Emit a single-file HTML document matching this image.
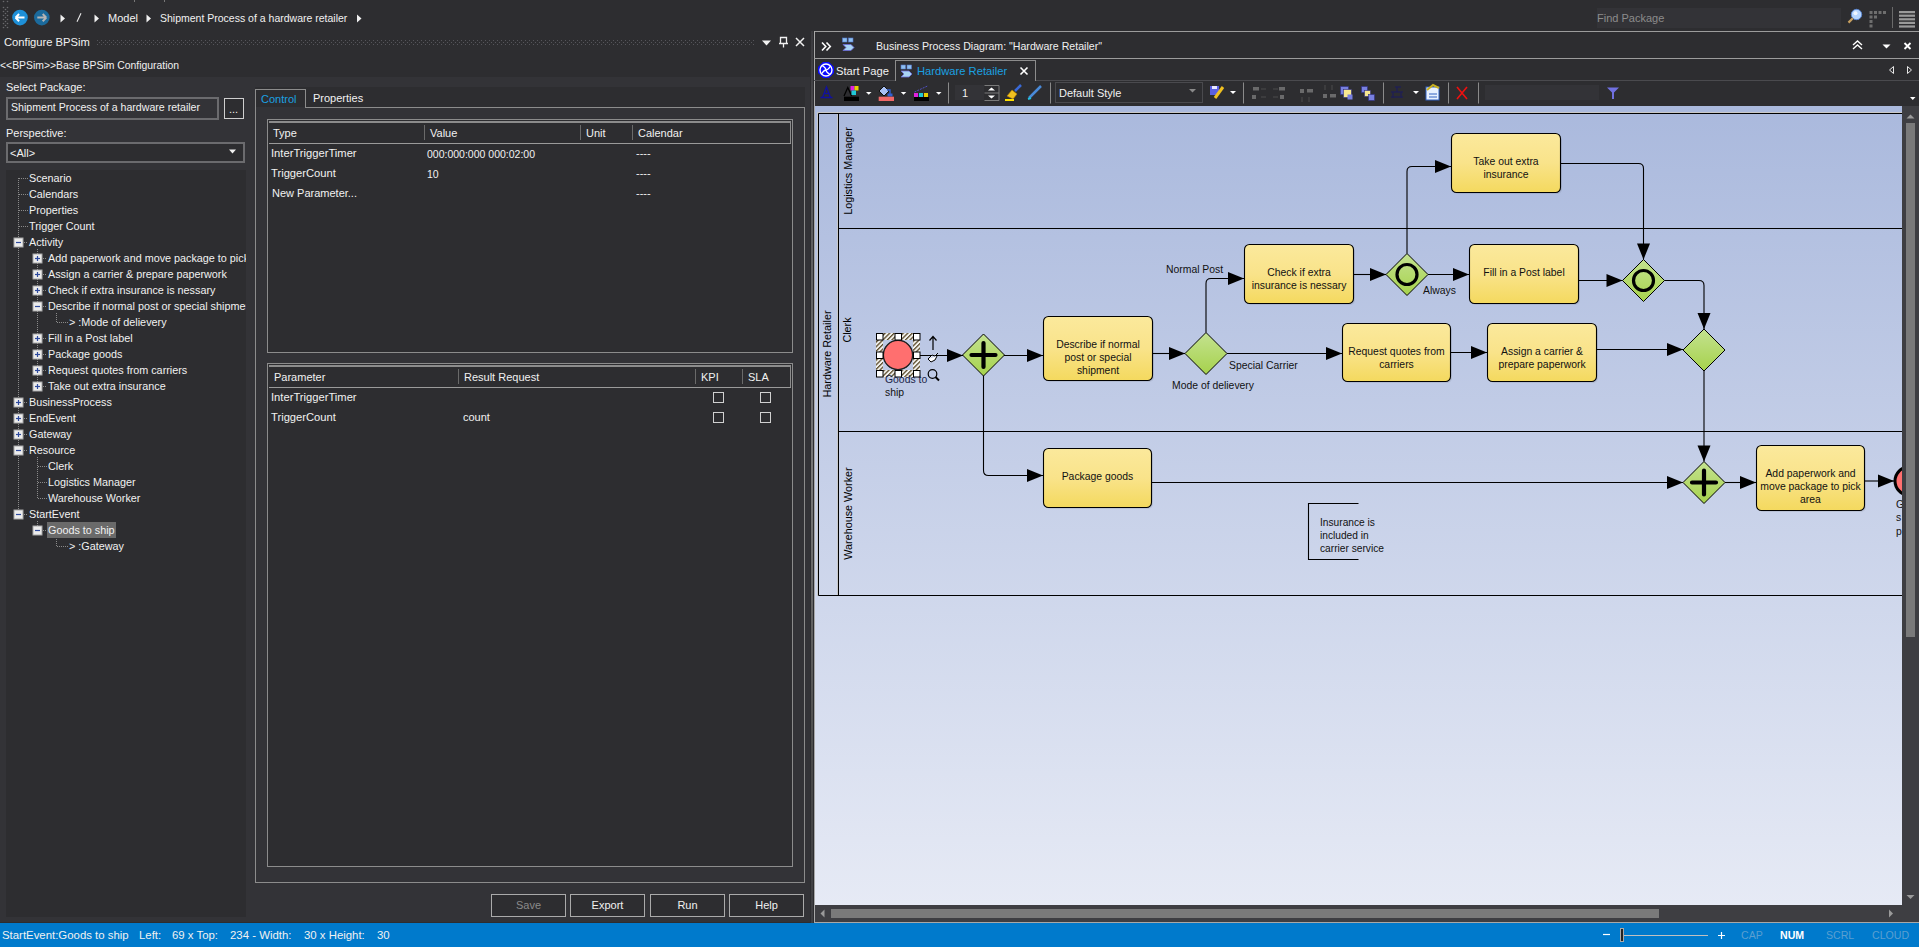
<!DOCTYPE html>
<html><head><meta charset="utf-8">
<style>
*{margin:0;padding:0;box-sizing:border-box}
html,body{width:1919px;height:947px;overflow:hidden;background:#2d2d30;font-family:"Liberation Sans",sans-serif;color:#f1f1f1;font-size:11px}
.a{position:absolute;white-space:nowrap}
.t{position:absolute;white-space:nowrap;line-height:14px}
</style></head><body>
<!-- TOPBAR -->
<div id="top">
<svg class="a" style="left:0;top:0" width="380" height="32">
 <g fill="#6a6a6e"><circle cx="3.5" cy="1.5" r="0.8"/><circle cx="7.5" cy="1.5" r="0.8"/>
 <circle cx="3.5" cy="7.5" r="0.8"/><circle cx="7.5" cy="7.5" r="0.8"/><circle cx="5.5" cy="9.5" r="0.8"/>
 <circle cx="3.5" cy="11.5" r="0.8"/><circle cx="7.5" cy="11.5" r="0.8"/><circle cx="5.5" cy="13.5" r="0.8"/>
 <circle cx="3.5" cy="15.5" r="0.8"/><circle cx="7.5" cy="15.5" r="0.8"/><circle cx="5.5" cy="17.5" r="0.8"/>
 <circle cx="3.5" cy="19.5" r="0.8"/><circle cx="7.5" cy="19.5" r="0.8"/><circle cx="5.5" cy="21.5" r="0.8"/>
 <circle cx="3.5" cy="23.5" r="0.8"/><circle cx="7.5" cy="23.5" r="0.8"/><circle cx="5.5" cy="25.5" r="0.8"/>
 <circle cx="3.5" cy="27.5" r="0.8"/><circle cx="7.5" cy="27.5" r="0.8"/></g>
 <circle cx="20" cy="17.6" r="7.8" fill="#1e90d8"/>
 <path d="M15.5 17.6h9M15.5 17.6l3.6-3.6M15.5 17.6l3.6 3.6" stroke="#fff" stroke-width="2" fill="none"/>
 <circle cx="41.8" cy="17.6" r="7.8" fill="#1b6a9c"/>
 <path d="M46.3 17.6h-9M46.3 17.6l-3.6-3.6M46.3 17.6l-3.6 3.6" stroke="#b4b4b4" stroke-width="2" fill="none"/>
 <path d="M60.5 14.5l4.5 4-4.5 4z" fill="#f1f1f1"/>
 <path d="M77 21.8l4-8.5" stroke="#e8e8e8" stroke-width="1.1"/>
 <path d="M94.5 14.5l4.5 4-4.5 4z" fill="#f1f1f1"/>
 <path d="M146.5 14.5l4.5 4-4.5 4z" fill="#f1f1f1"/>
 <path d="M357 14.5l4.5 4-4.5 4z" fill="#f1f1f1"/>
 <path d="M134.5 0v2M164.5 0v2" stroke="#777"/>
</svg>
<div class="t" style="left:108px;top:11px;font-size:11px">Model</div>
<div class="t" style="left:160px;top:11px;font-size:10.5px">Shipment Process of a hardware retailer</div>
<div class="a" style="left:1597px;top:8px;width:244px;height:20px;background:#333337"></div>
<div class="t" style="left:1597px;top:11px;color:#8c8c8c;font-size:11px">Find Package</div>
<svg class="a" style="left:1844px;top:6px" width="75" height="24">
 <circle cx="12.5" cy="8.5" r="5.2" fill="#b7d6ff" stroke="#5a86d0" stroke-width="1"/>
 <circle cx="11.5" cy="7.3" r="2" fill="#eef6ff"/>
 <path d="M8.8 12.3l-4.3 4.3" stroke="#c8a060" stroke-width="2.2"/>
 <g fill="#6e6e6e"><rect x="25.5" y="5" width="3" height="3"/><rect x="30" y="5" width="3" height="3"/><rect x="34.5" y="5" width="3" height="3"/><rect x="39" y="5" width="3" height="3"/><rect x="25.5" y="9.5" width="3" height="3"/><rect x="30" y="9.5" width="3" height="3"/><rect x="25.5" y="14" width="3" height="3"/><rect x="25.5" y="18.5" width="3" height="3"/></g>
 <path d="M48.5 1v21" stroke="#6a6a6a"/>
 <g fill="#9a9a9a"><rect x="55" y="5" width="16" height="2.2"/><rect x="55" y="8.6" width="16" height="2.2"/><rect x="55" y="12.2" width="16" height="2.2"/><rect x="55" y="15.8" width="16" height="2.2"/><rect x="55" y="19.4" width="16" height="2.2"/></g>
</svg>
</div>
<!-- LEFT PANEL -->
<div id="left">
<div class="t" style="left:4px;top:35px;font-size:11.2px">Configure BPSim</div>
<svg class="a" style="left:97px;top:39px" width="658" height="7"><defs><pattern id="grip" width="4" height="4" patternUnits="userSpaceOnUse"><rect x="0" y="1" width="1" height="1" fill="#55555a"/><rect x="2" y="3" width="1" height="1" fill="#55555a"/></pattern></defs><rect width="658" height="7" fill="url(#grip)"/></svg>
<svg class="a" style="left:755px;top:34px" width="55" height="16">
 <path d="M7 6.5h9l-4.5 5z" fill="#f1f1f1"/>
 <path d="M25.5 3.5h6v6h-6zM24 9.5h9M28.5 9.5v4" stroke="#f1f1f1" stroke-width="1.3" fill="none"/>
 <path d="M41 4l8 8M49 4l-8 8" stroke="#f1f1f1" stroke-width="1.5"/>
</svg>
<div class="t" style="left:0px;top:59px;font-size:10.4px">&lt;&lt;BPSim&gt;&gt;Base BPSim Configuration</div>
<div class="a" style="left:0;top:77px;width:810px;height:845px;background:#333337"></div>
<div class="t" style="left:6px;top:80px;font-size:11px">Select Package:</div>
<div class="a" style="left:6px;top:97px;width:213px;height:23px;border:2px solid #6b6b6e;background:#333337"></div>
<div class="t" style="left:11px;top:100px;font-size:10.6px">Shipment Process of a hardware retailer</div>
<div class="a" style="left:224px;top:98px;width:20px;height:21px;border:1px solid #cfcfcf;background:#2d2d30"></div>
<div class="t" style="left:229px;top:102px;font-size:11px">...</div>
<div class="t" style="left:6px;top:126px;font-size:11px">Perspective:</div>
<div class="a" style="left:6px;top:142px;width:239px;height:21px;border:2px solid #6b6b6e;background:#2d2d30"></div>
<div class="t" style="left:10px;top:146px;font-size:11px">&lt;All&gt;</div>
<svg class="a" style="left:228px;top:148px" width="10" height="8"><path d="M1 1.5h7l-3.5 4z" fill="#f1f1f1"/></svg>
<div class="a" style="left:6px;top:170px;width:240px;height:747px;background:#2d2d30;overflow:hidden">
<svg class="a" style="left:0;top:0" width="240" height="400"><path d="M12.5 8V344.5" stroke="#8a8a8a" stroke-width="1" stroke-dasharray="1 1"/><path d="M31.5 79V216.5" stroke="#8a8a8a" stroke-width="1" stroke-dasharray="1 1"/><path d="M31.5 287V328.5" stroke="#8a8a8a" stroke-width="1" stroke-dasharray="1 1"/><path d="M31.5 351V360.5" stroke="#8a8a8a" stroke-width="1" stroke-dasharray="1 1"/><path d="M50.5 143V152.5" stroke="#8a8a8a" stroke-width="1" stroke-dasharray="1 1"/><path d="M50.5 367V376.5" stroke="#8a8a8a" stroke-width="1" stroke-dasharray="1 1"/><path d="M13 8.5H22" stroke="#8a8a8a" stroke-width="1" stroke-dasharray="1 1"/><path d="M13 24.5H22" stroke="#8a8a8a" stroke-width="1" stroke-dasharray="1 1"/><path d="M13 40.5H22" stroke="#8a8a8a" stroke-width="1" stroke-dasharray="1 1"/><path d="M13 56.5H22" stroke="#8a8a8a" stroke-width="1" stroke-dasharray="1 1"/><path d="M18 72.5H22" stroke="#8a8a8a" stroke-width="1" stroke-dasharray="1 1"/><rect x="8.0" y="68" width="9" height="9" fill="#ececec" stroke="#a8a8a8" stroke-width="1"/><path d="M10.0 72.5h5" stroke="#2e4a9e" stroke-width="1.2"/><path d="M37 88.5H41" stroke="#8a8a8a" stroke-width="1" stroke-dasharray="1 1"/><rect x="27.0" y="84" width="9" height="9" fill="#ececec" stroke="#a8a8a8" stroke-width="1"/><path d="M29.0 88.5h5" stroke="#2e4a9e" stroke-width="1.2"/><path d="M31.5 86v5" stroke="#2e4a9e" stroke-width="1.2"/><path d="M37 104.5H41" stroke="#8a8a8a" stroke-width="1" stroke-dasharray="1 1"/><rect x="27.0" y="100" width="9" height="9" fill="#ececec" stroke="#a8a8a8" stroke-width="1"/><path d="M29.0 104.5h5" stroke="#2e4a9e" stroke-width="1.2"/><path d="M31.5 102v5" stroke="#2e4a9e" stroke-width="1.2"/><path d="M37 120.5H41" stroke="#8a8a8a" stroke-width="1" stroke-dasharray="1 1"/><rect x="27.0" y="116" width="9" height="9" fill="#ececec" stroke="#a8a8a8" stroke-width="1"/><path d="M29.0 120.5h5" stroke="#2e4a9e" stroke-width="1.2"/><path d="M31.5 118v5" stroke="#2e4a9e" stroke-width="1.2"/><path d="M37 136.5H41" stroke="#8a8a8a" stroke-width="1" stroke-dasharray="1 1"/><rect x="27.0" y="132" width="9" height="9" fill="#ececec" stroke="#a8a8a8" stroke-width="1"/><path d="M29.0 136.5h5" stroke="#2e4a9e" stroke-width="1.2"/><path d="M51 152.5H62" stroke="#8a8a8a" stroke-width="1" stroke-dasharray="1 1"/><path d="M37 168.5H41" stroke="#8a8a8a" stroke-width="1" stroke-dasharray="1 1"/><rect x="27.0" y="164" width="9" height="9" fill="#ececec" stroke="#a8a8a8" stroke-width="1"/><path d="M29.0 168.5h5" stroke="#2e4a9e" stroke-width="1.2"/><path d="M31.5 166v5" stroke="#2e4a9e" stroke-width="1.2"/><path d="M37 184.5H41" stroke="#8a8a8a" stroke-width="1" stroke-dasharray="1 1"/><rect x="27.0" y="180" width="9" height="9" fill="#ececec" stroke="#a8a8a8" stroke-width="1"/><path d="M29.0 184.5h5" stroke="#2e4a9e" stroke-width="1.2"/><path d="M31.5 182v5" stroke="#2e4a9e" stroke-width="1.2"/><path d="M37 200.5H41" stroke="#8a8a8a" stroke-width="1" stroke-dasharray="1 1"/><rect x="27.0" y="196" width="9" height="9" fill="#ececec" stroke="#a8a8a8" stroke-width="1"/><path d="M29.0 200.5h5" stroke="#2e4a9e" stroke-width="1.2"/><path d="M31.5 198v5" stroke="#2e4a9e" stroke-width="1.2"/><path d="M37 216.5H41" stroke="#8a8a8a" stroke-width="1" stroke-dasharray="1 1"/><rect x="27.0" y="212" width="9" height="9" fill="#ececec" stroke="#a8a8a8" stroke-width="1"/><path d="M29.0 216.5h5" stroke="#2e4a9e" stroke-width="1.2"/><path d="M31.5 214v5" stroke="#2e4a9e" stroke-width="1.2"/><path d="M18 232.5H22" stroke="#8a8a8a" stroke-width="1" stroke-dasharray="1 1"/><rect x="8.0" y="228" width="9" height="9" fill="#ececec" stroke="#a8a8a8" stroke-width="1"/><path d="M10.0 232.5h5" stroke="#2e4a9e" stroke-width="1.2"/><path d="M12.5 230v5" stroke="#2e4a9e" stroke-width="1.2"/><path d="M18 248.5H22" stroke="#8a8a8a" stroke-width="1" stroke-dasharray="1 1"/><rect x="8.0" y="244" width="9" height="9" fill="#ececec" stroke="#a8a8a8" stroke-width="1"/><path d="M10.0 248.5h5" stroke="#2e4a9e" stroke-width="1.2"/><path d="M12.5 246v5" stroke="#2e4a9e" stroke-width="1.2"/><path d="M18 264.5H22" stroke="#8a8a8a" stroke-width="1" stroke-dasharray="1 1"/><rect x="8.0" y="260" width="9" height="9" fill="#ececec" stroke="#a8a8a8" stroke-width="1"/><path d="M10.0 264.5h5" stroke="#2e4a9e" stroke-width="1.2"/><path d="M12.5 262v5" stroke="#2e4a9e" stroke-width="1.2"/><path d="M18 280.5H22" stroke="#8a8a8a" stroke-width="1" stroke-dasharray="1 1"/><rect x="8.0" y="276" width="9" height="9" fill="#ececec" stroke="#a8a8a8" stroke-width="1"/><path d="M10.0 280.5h5" stroke="#2e4a9e" stroke-width="1.2"/><path d="M32 296.5H41" stroke="#8a8a8a" stroke-width="1" stroke-dasharray="1 1"/><path d="M32 312.5H41" stroke="#8a8a8a" stroke-width="1" stroke-dasharray="1 1"/><path d="M32 328.5H41" stroke="#8a8a8a" stroke-width="1" stroke-dasharray="1 1"/><path d="M18 344.5H22" stroke="#8a8a8a" stroke-width="1" stroke-dasharray="1 1"/><rect x="8.0" y="340" width="9" height="9" fill="#ececec" stroke="#a8a8a8" stroke-width="1"/><path d="M10.0 344.5h5" stroke="#2e4a9e" stroke-width="1.2"/><path d="M37 360.5H41" stroke="#8a8a8a" stroke-width="1" stroke-dasharray="1 1"/><rect x="27.0" y="356" width="9" height="9" fill="#ececec" stroke="#a8a8a8" stroke-width="1"/><path d="M29.0 360.5h5" stroke="#2e4a9e" stroke-width="1.2"/><path d="M51 376.5H62" stroke="#8a8a8a" stroke-width="1" stroke-dasharray="1 1"/></svg>
</div>
<div class="a" style="left:0;top:0;width:246px;height:917px;overflow:hidden">
<div class="t" style="left:29px;top:171px;font-size:10.8px">Scenario</div>
<div class="t" style="left:29px;top:187px;font-size:10.8px">Calendars</div>
<div class="t" style="left:29px;top:203px;font-size:10.8px">Properties</div>
<div class="t" style="left:29px;top:219px;font-size:10.8px">Trigger Count</div>
<div class="t" style="left:29px;top:235px;font-size:10.8px">Activity</div>
<div class="t" style="left:48px;top:251px;font-size:10.8px">Add paperwork and move package to pick area</div>
<div class="t" style="left:48px;top:267px;font-size:10.8px">Assign a carrier &amp; prepare paperwork</div>
<div class="t" style="left:48px;top:283px;font-size:10.8px">Check if extra insurance is nessary</div>
<div class="t" style="left:48px;top:299px;font-size:10.8px">Describe if normal post or special shipment</div>
<div class="t" style="left:69px;top:315px;font-size:10.8px">&gt; :Mode of delievery</div>
<div class="t" style="left:48px;top:331px;font-size:10.8px">Fill in a Post label</div>
<div class="t" style="left:48px;top:347px;font-size:10.8px">Package goods</div>
<div class="t" style="left:48px;top:363px;font-size:10.8px">Request quotes from carriers</div>
<div class="t" style="left:48px;top:379px;font-size:10.8px">Take out extra insurance</div>
<div class="t" style="left:29px;top:395px;font-size:10.8px">BusinessProcess</div>
<div class="t" style="left:29px;top:411px;font-size:10.8px">EndEvent</div>
<div class="t" style="left:29px;top:427px;font-size:10.8px">Gateway</div>
<div class="t" style="left:29px;top:443px;font-size:10.8px">Resource</div>
<div class="t" style="left:48px;top:459px;font-size:10.8px">Clerk</div>
<div class="t" style="left:48px;top:475px;font-size:10.8px">Logistics Manager</div>
<div class="t" style="left:48px;top:491px;font-size:10.8px">Warehouse Worker</div>
<div class="t" style="left:29px;top:507px;font-size:10.8px">StartEvent</div>
<div class="a" style="left:47px;top:522px;width:69px;height:16px;background:#6a6a6a"></div>
<div class="t" style="left:48px;top:523px;font-size:10.8px">Goods to ship</div>
<div class="t" style="left:69px;top:539px;font-size:10.8px">&gt; :Gateway</div>
</div>
<!-- tabs -->
<div class="a" style="left:255px;top:87px;width:555px;height:20px;background:#2d2d30"></div>
<div class="a" style="left:255px;top:89px;width:51px;height:20px;border:1px solid #8c8c8c;border-bottom:none;background:#2d2d30"></div>
<div class="t" style="left:261px;top:92px;color:#1ba1e2;font-size:11px">Control</div>
<div class="t" style="left:313px;top:91px;font-size:11px">Properties</div>
<div class="a" style="left:255px;top:107px;width:550px;height:776px;border:1px solid #8c8c8c;border-top:none;background:#333337"></div>
<div class="a" style="left:305px;top:107px;width:500px;height:1px;background:#8c8c8c"></div>
<div class="a" style="left:805px;top:87px;width:5px;height:835px;background:#333337"></div>
<!-- table 1 -->
<div class="a" style="left:267px;top:119px;width:526px;height:234px;border:1px solid #8c8c8c;background:#2d2d30"></div>
<div class="a" style="left:269px;top:121px;width:522px;height:2px;background:#8c8c8c"></div>
<div class="a" style="left:269px;top:143px;width:522px;height:1px;background:#9a9a9a"></div>
<div class="a" style="left:790px;top:121px;width:1px;height:22px;background:#8c8c8c"></div>
<div class="a" style="left:424px;top:125px;width:1px;height:15px;background:#6a6a6a"></div>
<div class="a" style="left:580px;top:125px;width:1px;height:15px;background:#6a6a6a"></div>
<div class="a" style="left:632px;top:125px;width:1px;height:15px;background:#6a6a6a"></div>
<div class="t" style="left:273px;top:126px">Type</div>
<div class="t" style="left:430px;top:126px">Value</div>
<div class="t" style="left:586px;top:126px">Unit</div>
<div class="t" style="left:638px;top:126px">Calendar</div>
<div class="t" style="left:271px;top:146px;font-size:11.2px">InterTriggerTimer</div>
<div class="t" style="left:427px;top:147px;font-size:10.5px">000:000:000 000:02:00</div>
<div class="t" style="left:636px;top:146px">----</div>
<div class="t" style="left:271px;top:166px;font-size:11.2px">TriggerCount</div>
<div class="t" style="left:427px;top:167px;font-size:10.5px">10</div>
<div class="t" style="left:636px;top:166px">----</div>
<div class="t" style="left:272px;top:186px;font-size:11px">New Parameter...</div>
<div class="t" style="left:636px;top:186px">----</div>
<!-- table 2 -->
<div class="a" style="left:267px;top:363px;width:526px;height:504px;border:1px solid #8c8c8c;background:#2d2d30"></div>
<div class="a" style="left:269px;top:365px;width:522px;height:2px;background:#8c8c8c"></div>
<div class="a" style="left:269px;top:387px;width:522px;height:1px;background:#9a9a9a"></div>
<div class="a" style="left:790px;top:365px;width:1px;height:22px;background:#8c8c8c"></div>
<div class="a" style="left:458px;top:369px;width:1px;height:15px;background:#6a6a6a"></div>
<div class="a" style="left:695px;top:369px;width:1px;height:15px;background:#6a6a6a"></div>
<div class="a" style="left:742px;top:369px;width:1px;height:15px;background:#6a6a6a"></div>
<div class="t" style="left:274px;top:370px">Parameter</div>
<div class="t" style="left:464px;top:370px">Result Request</div>
<div class="t" style="left:701px;top:370px">KPI</div>
<div class="t" style="left:748px;top:370px">SLA</div>
<div class="t" style="left:271px;top:390px;font-size:11.2px">InterTriggerTimer</div>
<div class="t" style="left:271px;top:410px;font-size:11.2px">TriggerCount</div>
<div class="t" style="left:463px;top:410px;font-size:11px">count</div>
<div class="a" style="left:713px;top:392px;width:11px;height:11px;border:1px solid #d0d0d0"></div>
<div class="a" style="left:760px;top:392px;width:11px;height:11px;border:1px solid #d0d0d0"></div>
<div class="a" style="left:713px;top:412px;width:11px;height:11px;border:1px solid #d0d0d0"></div>
<div class="a" style="left:760px;top:412px;width:11px;height:11px;border:1px solid #d0d0d0"></div>
<!-- buttons -->
<div class="a" style="left:491px;top:894px;width:75px;height:23px;border:1px solid #aaa;background:#2d2d30"></div>
<div class="t" style="left:491px;top:898px;width:75px;text-align:center;color:#8a8a8a">Save</div>
<div class="a" style="left:570px;top:894px;width:75px;height:23px;border:1px solid #aaa;background:#2d2d30"></div>
<div class="t" style="left:570px;top:898px;width:75px;text-align:center">Export</div>
<div class="a" style="left:650px;top:894px;width:75px;height:23px;border:1px solid #aaa;background:#2d2d30"></div>
<div class="t" style="left:650px;top:898px;width:75px;text-align:center">Run</div>
<div class="a" style="left:729px;top:894px;width:75px;height:23px;border:1px solid #aaa;background:#2d2d30"></div>
<div class="t" style="left:729px;top:898px;width:75px;text-align:center">Help</div>
<div class="a" style="left:810px;top:31px;width:4px;height:892px;background:#2d2d30"></div>
<div class="a" style="left:811px;top:31px;width:2px;height:892px;background:linear-gradient(#3a3a3e 0%,#5a5a5c 20%,#777 50%,#5c5c5c 70%,#4a4a4a 82%,#3e3e42 100%)"></div>
</div>
<!-- RIGHT PANEL -->
<div id="right">
<div class="a" style="left:814px;top:31px;width:1105px;height:1px;background:#9c9c9c"></div>
<div class="a" style="left:814px;top:31px;width:1px;height:892px;background:#a8a8a8"></div>
<div class="a" style="left:814px;top:922px;width:1105px;height:1px;background:#a8a8a8"></div>
<div class="a" style="left:814px;top:58px;width:1105px;height:1px;background:#9c9c9c"></div>
<svg class="a" style="left:815px;top:32px" width="60" height="26">
 <path d="M7 10.5l3.8 4-3.8 4M11.5 10.5l3.8 4-3.8 4" stroke="#fff" stroke-width="1.6" fill="none"/>
 <rect x="27.5" y="6" width="4.5" height="4" fill="#8ec0f0" stroke="#5577cc" stroke-width="0.6"/>
 <rect x="33.5" y="6" width="4.5" height="4" fill="#8ec0f0" stroke="#5577cc" stroke-width="0.6"/>
 <path d="M28 12.5h8l3 3-3 3h-8l3-3z" fill="#a8d4f4" stroke="#6a6ad8" stroke-width="0.8"/>
</svg>
<div class="t" style="left:876px;top:39px;font-size:10.6px">Business Process Diagram: "Hardware Retailer"</div>
<svg class="a" style="left:1845px;top:34px" width="74" height="22">
 <path d="M8 11l4.5-4 4.5 4M8 15l4.5-4 4.5 4" stroke="#fff" stroke-width="1.4" fill="none"/>
 <path d="M37.5 10.5h8l-4 4z" fill="#fff"/>
 <path d="M59.5 9l6 6M65.5 9l-6 6" stroke="#fff" stroke-width="1.8"/>
</svg>
<!-- tabs -->
<svg class="a" style="left:816px;top:60px" width="20" height="20">
 <path d="M7 2h6l5 5v6l-5 5H7l-5-5V7z" fill="#0a0aff"/>
 <circle cx="10" cy="10" r="6" fill="none" stroke="#fff" stroke-width="1.4"/>
 <path d="M6 5.5Q10 8 10 10T14 14.5M14.5 6Q12 10 10 10T5.5 14" fill="none" stroke="#fff" stroke-width="1.3"/>
</svg>
<div class="t" style="left:836px;top:64px;font-size:11.2px">Start Page</div>
<div class="a" style="left:814px;top:80px;width:1105px;height:1px;background:#4a4a4e"></div>
<div class="a" style="left:895px;top:60px;width:141px;height:21px;border:1px solid #8c8c8c;border-bottom:none;background:#2d2d30"></div>
<svg class="a" style="left:897px;top:60px" width="20" height="20">
 <rect x="4" y="5" width="4.5" height="4" fill="#8ec0f0" stroke="#5577cc" stroke-width="0.6"/>
 <rect x="10" y="5" width="4.5" height="4" fill="#8ec0f0" stroke="#5577cc" stroke-width="0.6"/>
 <path d="M4 11h8l3 3-3 3H4l3-3z" fill="#a8d4f4" stroke="#6a6ad8" stroke-width="0.8"/>
</svg>
<div class="t" style="left:917px;top:64px;color:#1ba1e2;font-size:11.2px">Hardware Retailer</div>
<svg class="a" style="left:1017px;top:64px" width="14" height="14"><path d="M3.5 3.5l7 7M10.5 3.5l-7 7" stroke="#fff" stroke-width="1.6"/></svg>
<svg class="a" style="left:1885px;top:62px" width="34" height="16">
 <path d="M8.5 4.5v7l-4-3.5z" fill="none" stroke="#e8e8e8" stroke-width="1"/>
 <path d="M22.5 4.5v7l4-3.5z" fill="none" stroke="#e8e8e8" stroke-width="1"/>
</svg>
<!-- toolbar -->
<svg class="a" style="left:815px;top:81px" width="1104" height="25">
 <path d="M5.5 16.5h12M7.5 16.5l4-10.5 4 10.5M9 12.5h5" stroke="#1010a0" stroke-width="1.3" fill="none"/>
 <path d="M29 15l3.8-8.5 3.8 8.5" stroke="#000" stroke-width="1.3" fill="none"/>
 <rect x="35.5" y="5" width="4" height="4.5" fill="#e020e0"/><rect x="39.5" y="5" width="4" height="4.5" fill="#e8d000"/><rect x="36.5" y="9.5" width="4.5" height="4.5" fill="#20c8d8"/>
 <rect x="29" y="15.7" width="15" height="4.3" fill="#000"/>
 <path d="M51 11h5.5l-2.75 2.8z" fill="#fff"/>
 <path d="M64 10l5-5 5 5-5 5z" fill="#a8c0f4" stroke="#111" stroke-width="1"/><path d="M72 9h3v4.5" stroke="#3060d0" stroke-width="1.4" fill="none"/><rect x="72.5" y="12.5" width="5" height="3" fill="#3060d0"/>
 <rect x="63.7" y="15.7" width="15.3" height="4.3" fill="#f06868"/>
 <path d="M85.8 11h5.5l-2.75 2.8z" fill="#fff"/>
 <path d="M99.5 11l13-6" stroke="#5050c0" stroke-width="1" stroke-dasharray="2 1"/>
 <rect x="99" y="12" width="4" height="4" fill="#e020e0"/><rect x="104" y="12" width="4" height="4" fill="#20c8d8"/><rect x="109" y="12" width="4" height="4" fill="#e8d000"/>
 <rect x="99" y="16" width="15" height="4" fill="#000"/>
 <path d="M121 11h5.5l-2.75 2.8z" fill="#fff"/>
 <path d="M133.5 1.5v21" stroke="#8a8a8a"/>
 <rect x="140" y="4" width="29" height="15" fill="#333337"/>
 <path d="M169.5 4.5h14.5v15h-14.5M169.5 12h14.5" stroke="#7a7a7a" stroke-width="1" fill="none"/>
 <path d="M173 9.5l3.5-3 3.5 3z M173 14.5l3.5 3 3.5-3z" fill="#fff"/>
 <path d="M192 15l5-6 5 4-4 5z" fill="#f0c020" stroke="#b08000" stroke-width="0.6"/><path d="M200 10l6-6" stroke="#3a6ad8" stroke-width="2.5"/><path d="M190 19h9" stroke="#ffe000" stroke-width="2"/>
 <path d="M214 17l12-12" stroke="#4a8ad8" stroke-width="2.5"/><path d="M213 18l3-1" stroke="#20c0e0" stroke-width="2"/>
 <path d="M235.5 1.5v21" stroke="#8a8a8a"/>
</svg>
<div class="t" style="left:962px;top:86px;font-size:11px">1</div>
<div class="a" style="left:1055px;top:82px;width:148px;height:21px;border:1px solid #4a4a4e;background:#2d2d30"></div>
<div class="t" style="left:1059px;top:86px;font-size:11px">Default Style</div>
<svg class="a" style="left:1188px;top:88px" width="10" height="6"><path d="M1 1h7l-3.5 3.5z" fill="#8a8a8a"/></svg>
<svg class="a" style="left:1205px;top:81px" width="714" height="25">
 <rect x="5" y="5" width="9" height="9" fill="#5a60e0"/><rect x="7" y="5" width="5" height="3" fill="#e8e8ff"/>
 <path d="M10 17l8-11" stroke="#f0c020" stroke-width="3"/>
 <path d="M25 10h6l-3 3z" fill="#fff"/>
 <path d="M38.5 1.5v21" stroke="#8a8a8a"/>
 <g fill="#7a7a7a" opacity="0.8">
 <rect x="48" y="6" width="6" height="3.5"/><rect x="47" y="14" width="4" height="4"/><path d="M56 8h5M56 16h5" stroke="#555" fill="none"/>
 <rect x="74" y="6" width="6" height="3.5"/><rect x="75" y="14" width="4" height="4"/><path d="M68 8h5M68 16h5" stroke="#555" fill="none"/>
 <rect x="95" y="8" width="4" height="4"/><rect x="102" y="8" width="6" height="3.5"/><path d="M97 16v5M104 16v5" stroke="#555" fill="none"/>
 <rect x="118" y="13" width="4" height="4"/><rect x="125" y="13" width="6" height="3.5"/><path d="M120 4v5M127 4v5" stroke="#555" fill="none"/>
 </g>
 <rect x="135.5" y="5.5" width="8" height="8" fill="#7880e0" stroke="#303080" stroke-width="0.6"/><rect x="138.5" y="8.5" width="8" height="8" fill="#f8e890" stroke="#303080" stroke-width="0.6"/><rect x="142.5" y="13.5" width="5" height="5" fill="#7880e0"/>
 <rect x="156.5" y="5.5" width="6" height="6" fill="#7880e0" stroke="#303080" stroke-width="0.6"/><rect x="159.5" y="9.5" width="6" height="6" fill="#f8e890" stroke="#303080" stroke-width="0.6"/><rect x="163.5" y="13.5" width="6" height="6" fill="#7880e0" stroke="#303080" stroke-width="0.6"/>
 <path d="M178.5 1.5v21" stroke="#8a8a8a"/>
 <path d="M190 6h6M186 11h12M186 16h12M188 11v6M196 11v6M192 6v5" stroke="#202050" stroke-width="1.5" fill="none"/>
 <path d="M208 10h6l-3 3z" fill="#fff"/>
 <rect x="221" y="6" width="13" height="13" fill="#e8f0ff" stroke="#3060c0"/><path d="M222 9l6-5 6 3" stroke="#c8b020" stroke-width="2" fill="none"/><path d="M224 13h8M224 16h8" stroke="#3060c0"/>
 <path d="M243.5 1.5v21" stroke="#8a8a8a"/>
 <path d="M252 6l10 12M262 6l-10 12" stroke="#ee1010" stroke-width="1.6"/>
 <path d="M273.5 1.5v21" stroke="#8a8a8a"/>
 <rect x="280" y="4" width="114" height="15" fill="#333337"/>
 <path d="M402 6.5h12l-5 5v6.5h-2v-6.5z" fill="#7070e0"/>
 <path d="M705 16h5.5l-2.75 3z" fill="#fff"/>
</svg>
<!-- DIAGRAM -->
<div class="a" style="left:815px;top:106px;width:1087px;height:799px;background:linear-gradient(#aab9dd,#e6eaf5)"></div>
<svg class="a" id="diag" style="left:815px;top:106px" width="1087" height="799"><defs>
<linearGradient id="gt" x1="0" y1="0" x2="0" y2="1"><stop offset="0" stop-color="#fbe99c"/><stop offset="0.5" stop-color="#f9e38a"/><stop offset="1" stop-color="#f4d95e"/></linearGradient>
<linearGradient id="gg" x1="0" y1="0" x2="0" y2="1"><stop offset="0" stop-color="#c4e290"/><stop offset="1" stop-color="#a6d24c"/></linearGradient>
<pattern id="hatch" width="3.2" height="3.2" patternUnits="userSpaceOnUse" patternTransform="rotate(45)"><rect width="3.2" height="3.2" fill="#f4f4f0"/><rect width="1.3" height="3.2" fill="#5a4a2a"/></pattern>
</defs>
<g transform="translate(-815,-106)">
<path d="M817.5 596V112.5H1910M837.5 112.5V596" stroke="#c8c8c8" stroke-width="1" fill="none"/>
<path d="M818.5 113.5H1910M818.5 113.5V595.5H1910M838.5 113.5V595.5M838.5 228.5H1910M838.5 431.5H1910" stroke="#000" stroke-width="1" fill="none"/>
<text font-family="Liberation Sans" font-size="10.8" fill="#000" text-anchor="middle" transform="translate(827.5,354) rotate(-90)" dy="3.8">Hardware Retailer</text>
<text font-family="Liberation Sans" font-size="10.8" fill="#000" text-anchor="middle" transform="translate(847.8,171) rotate(-90)" dy="3.8">Logistics Manager</text>
<text font-family="Liberation Sans" font-size="10.8" fill="#000" text-anchor="middle" transform="translate(847.5,330) rotate(-90)" dy="3.8">Clerk</text>
<text font-family="Liberation Sans" font-size="10.8" fill="#000" text-anchor="middle" transform="translate(847.8,513.5) rotate(-90)" dy="3.8">Warehouse Worker</text>
<rect x="1045" y="318" width="109" height="64" rx="5" fill="#000" opacity="0.08"/>
<rect x="1043.5" y="316.5" width="109" height="64" rx="5" fill="url(#gt)" stroke="#000" stroke-width="1.1"/>
<text font-family="Liberation Sans" font-size="10.4" fill="#111" text-anchor="middle" x="1098.0" y="348.0">Describe if normal</text>
<text font-family="Liberation Sans" font-size="10.4" fill="#111" text-anchor="middle" x="1098.0" y="361.0">post or special</text>
<text font-family="Liberation Sans" font-size="10.4" fill="#111" text-anchor="middle" x="1098.0" y="374.0">shipment</text>
<rect x="1246" y="246" width="109" height="59" rx="5" fill="#000" opacity="0.08"/>
<rect x="1244.5" y="244.5" width="109" height="59" rx="5" fill="url(#gt)" stroke="#000" stroke-width="1.1"/>
<text font-family="Liberation Sans" font-size="10.4" fill="#111" text-anchor="middle" x="1299.0" y="276.0">Check if extra</text>
<text font-family="Liberation Sans" font-size="10.4" fill="#111" text-anchor="middle" x="1299.0" y="289.0">insurance is nessary</text>
<rect x="1453" y="135" width="109" height="59" rx="5" fill="#000" opacity="0.08"/>
<rect x="1451.5" y="133.5" width="109" height="59" rx="5" fill="url(#gt)" stroke="#000" stroke-width="1.1"/>
<text font-family="Liberation Sans" font-size="10.4" fill="#111" text-anchor="middle" x="1506.0" y="165.0">Take out extra</text>
<text font-family="Liberation Sans" font-size="10.4" fill="#111" text-anchor="middle" x="1506.0" y="178.0">insurance</text>
<rect x="1471" y="246" width="109" height="59" rx="5" fill="#000" opacity="0.08"/>
<rect x="1469.5" y="244.5" width="109" height="59" rx="5" fill="url(#gt)" stroke="#000" stroke-width="1.1"/>
<text font-family="Liberation Sans" font-size="10.4" fill="#111" text-anchor="middle" x="1524.0" y="276.0">Fill in a Post label</text>
<rect x="1344" y="325" width="108" height="58" rx="5" fill="#000" opacity="0.08"/>
<rect x="1342.5" y="323.5" width="108" height="58" rx="5" fill="url(#gt)" stroke="#000" stroke-width="1.1"/>
<text font-family="Liberation Sans" font-size="10.4" fill="#111" text-anchor="middle" x="1396.5" y="355.0">Request quotes from</text>
<text font-family="Liberation Sans" font-size="10.4" fill="#111" text-anchor="middle" x="1396.5" y="368.0">carriers</text>
<rect x="1489" y="325" width="109" height="58" rx="5" fill="#000" opacity="0.08"/>
<rect x="1487.5" y="323.5" width="109" height="58" rx="5" fill="url(#gt)" stroke="#000" stroke-width="1.1"/>
<text font-family="Liberation Sans" font-size="10.4" fill="#111" text-anchor="middle" x="1542.0" y="355.0">Assign a carrier &amp;</text>
<text font-family="Liberation Sans" font-size="10.4" fill="#111" text-anchor="middle" x="1542.0" y="368.0">prepare paperwork</text>
<rect x="1045" y="450" width="108" height="59" rx="5" fill="#000" opacity="0.08"/>
<rect x="1043.5" y="448.5" width="108" height="59" rx="5" fill="url(#gt)" stroke="#000" stroke-width="1.1"/>
<text font-family="Liberation Sans" font-size="10.4" fill="#111" text-anchor="middle" x="1097.5" y="480.0">Package goods</text>
<rect x="1758" y="447" width="108" height="65" rx="5" fill="#000" opacity="0.08"/>
<rect x="1756.5" y="445.5" width="108" height="65" rx="5" fill="url(#gt)" stroke="#000" stroke-width="1.1"/>
<text font-family="Liberation Sans" font-size="10.4" fill="#111" text-anchor="middle" x="1810.5" y="477.0">Add paperwork and</text>
<text font-family="Liberation Sans" font-size="10.4" fill="#111" text-anchor="middle" x="1810.5" y="490.0">move package to pick</text>
<text font-family="Liberation Sans" font-size="10.4" fill="#111" text-anchor="middle" x="1810.5" y="503.0">area</text>
<path d="M983.5 334L1004.5 355L983.5 376L962.5 355Z" fill="url(#gg)" stroke="#000" stroke-width="1"/>
<path d="M971.5 355H995.5M983.5 343V367" stroke="#000" stroke-width="4.2" stroke-linecap="round"/>
<path d="M1206 332.5L1227 353.5L1206 374.5L1185 353.5Z" fill="url(#gg)" stroke="#000" stroke-width="1"/>
<path d="M1407 253.5L1428 274.5L1407 295.5L1386 274.5Z" fill="url(#gg)" stroke="#000" stroke-width="1"/>
<circle cx="1407" cy="274.5" r="10" fill="none" stroke="#000" stroke-width="3.2"/>
<path d="M1643.5 259.5L1664.5 280.5L1643.5 301.5L1622.5 280.5Z" fill="url(#gg)" stroke="#000" stroke-width="1"/>
<circle cx="1643.5" cy="280.5" r="10" fill="none" stroke="#000" stroke-width="3.2"/>
<path d="M1704 329L1725 350L1704 371L1683 350Z" fill="url(#gg)" stroke="#000" stroke-width="1"/>
<path d="M1704 461.5L1725 482.5L1704 503.5L1683 482.5Z" fill="url(#gg)" stroke="#000" stroke-width="1"/>
<path d="M1692 482.5H1716M1704 470.5V494.5" stroke="#000" stroke-width="4.2" stroke-linecap="round"/>
<circle cx="898" cy="355" r="14.3" fill="#ff6f6f" stroke="#222" stroke-width="1.3"/>
<circle cx="1909" cy="481" r="14" fill="#ff6f6f" stroke="#000" stroke-width="3"/>
<path d="M912.5 355.5H963" stroke="#000" stroke-width="1.1" fill="none"/>
<path d="M963 355.5L947 349.0L947 362.0Z" fill="#000"/>
<path d="M1004 355.5H1043" stroke="#000" stroke-width="1.1" fill="none"/>
<path d="M1043 355.5L1027 349.0L1027 362.0Z" fill="#000"/>
<path d="M1153 353.5H1185" stroke="#000" stroke-width="1.1" fill="none"/>
<path d="M1185 353.5L1169 347.0L1169 360.0Z" fill="#000"/>
<path d="M1206 332.5V283.5Q1206 278.5 1211 278.5H1244" stroke="#000" stroke-width="1.1" fill="none"/>
<path d="M1244 278.5L1228 272.0L1228 285.0Z" fill="#000"/>
<path d="M1227 353.5H1342" stroke="#000" stroke-width="1.1" fill="none"/>
<path d="M1342 353.5L1326 347.0L1326 360.0Z" fill="#000"/>
<path d="M1354 274.5H1386" stroke="#000" stroke-width="1.1" fill="none"/>
<path d="M1386 274.5L1370 268.0L1370 281.0Z" fill="#000"/>
<path d="M1407 253.5V171.5Q1407 166.5 1412 166.5H1451" stroke="#000" stroke-width="1.1" fill="none"/>
<path d="M1451 166.5L1435 160.0L1435 173.0Z" fill="#000"/>
<path d="M1428 274.5H1469" stroke="#000" stroke-width="1.1" fill="none"/>
<path d="M1469 274.5L1453 268.0L1453 281.0Z" fill="#000"/>
<path d="M1561 163.5H1638.5Q1643.5 163.5 1643.5 168.5V259.5" stroke="#000" stroke-width="1.1" fill="none"/>
<path d="M1643.5 259.5L1637.0 243.5L1650.0 243.5Z" fill="#000"/>
<path d="M1579 280.5H1622.5" stroke="#000" stroke-width="1.1" fill="none"/>
<path d="M1622.5 280.5L1606.5 274.0L1606.5 287.0Z" fill="#000"/>
<path d="M1664.5 280.5H1699Q1704 280.5 1704 285.5V329" stroke="#000" stroke-width="1.1" fill="none"/>
<path d="M1704 329L1697.5 313L1710.5 313Z" fill="#000"/>
<path d="M1450 352.5H1487" stroke="#000" stroke-width="1.1" fill="none"/>
<path d="M1487 352.5L1471 346.0L1471 359.0Z" fill="#000"/>
<path d="M1596 349.5H1683" stroke="#000" stroke-width="1.1" fill="none"/>
<path d="M1683 349.5L1667 343.0L1667 356.0Z" fill="#000"/>
<path d="M1704 371V461.5" stroke="#000" stroke-width="1.1" fill="none"/>
<path d="M1704 461.5L1697.5 445.5L1710.5 445.5Z" fill="#000"/>
<path d="M983.5 376V470.5Q983.5 475.5 988.5 475.5H1043" stroke="#000" stroke-width="1.1" fill="none"/>
<path d="M1043 475.5L1027 469.0L1027 482.0Z" fill="#000"/>
<path d="M1152 482.5H1683" stroke="#000" stroke-width="1.1" fill="none"/>
<path d="M1683 482.5L1667 476.0L1667 489.0Z" fill="#000"/>
<path d="M1725 482.5H1756" stroke="#000" stroke-width="1.1" fill="none"/>
<path d="M1756 482.5L1740 476.0L1740 489.0Z" fill="#000"/>
<path d="M1865 481H1894" stroke="#000" stroke-width="1.1" fill="none"/>
<path d="M1894 481L1878 474.5L1878 487.5Z" fill="#000"/>
<path d="M876 333h44v44h-44zM883 340v30h30v-30z" fill="url(#hatch)" fill-rule="evenodd"/>
<circle cx="898" cy="355" r="14.6" fill="#ff6f6f" stroke="#222" stroke-width="1.3"/>
<rect x="876.5" y="333.5" width="6.5" height="6.5" fill="#fff" stroke="#000" stroke-width="1"/>
<rect x="895.0" y="333.5" width="6.5" height="6.5" fill="#fff" stroke="#000" stroke-width="1"/>
<rect x="913.5" y="333.5" width="6.5" height="6.5" fill="#fff" stroke="#000" stroke-width="1"/>
<rect x="876.5" y="352.0" width="6.5" height="6.5" fill="#fff" stroke="#000" stroke-width="1"/>
<rect x="913.5" y="352.0" width="6.5" height="6.5" fill="#fff" stroke="#000" stroke-width="1"/>
<rect x="876.5" y="370.5" width="6.5" height="6.5" fill="#fff" stroke="#000" stroke-width="1"/>
<rect x="895.0" y="370.5" width="6.5" height="6.5" fill="#fff" stroke="#000" stroke-width="1"/>
<rect x="913.5" y="370.5" width="6.5" height="6.5" fill="#fff" stroke="#000" stroke-width="1"/>
<path d="M933 350V337M929.5 340.5L933 336.5L936.5 340.5" stroke="#000" stroke-width="1.2" fill="none"/>
<path d="M928 359l4-4 3 1 3-3M928 359l3 3 4-2 2-4" stroke="#000" stroke-width="1" fill="#fff"/>
<circle cx="932.5" cy="374" r="4.3" fill="none" stroke="#000" stroke-width="1.2"/><path d="M935.5 377l3.5 3.5" stroke="#000" stroke-width="2"/>
<text font-family="Liberation Sans" font-size="10.4" fill="#111" text-anchor="start" x="1166" y="272.5">Normal Post</text>
<text font-family="Liberation Sans" font-size="10.4" fill="#111" text-anchor="start" x="1229" y="368.5">Special Carrier</text>
<text font-family="Liberation Sans" font-size="10.4" fill="#111" text-anchor="start" x="1172" y="389">Mode of delievery</text>
<text font-family="Liberation Sans" font-size="10.4" fill="#111" text-anchor="start" x="1423" y="294">Always</text>
<text font-family="Liberation Sans" font-size="10.4" fill="#1a2448" text-anchor="start" x="885" y="383">Goods to</text>
<text font-family="Liberation Sans" font-size="10.4" fill="#111" text-anchor="start" x="885" y="396">ship</text>
<text font-family="Liberation Sans" font-size="10.4" fill="#111" text-anchor="start" x="1896" y="508">G</text>
<text font-family="Liberation Sans" font-size="10.4" fill="#111" text-anchor="start" x="1896" y="521">s</text>
<text font-family="Liberation Sans" font-size="10.4" fill="#111" text-anchor="start" x="1896" y="535">p</text>
<path d="M1358.5 503.5H1308.5V559.5H1358.5" stroke="#000" stroke-width="1.1" fill="none"/>
<text font-family="Liberation Sans" font-size="10.2" fill="#111" text-anchor="start" x="1320" y="526">Insurance is</text>
<text font-family="Liberation Sans" font-size="10.2" fill="#111" text-anchor="start" x="1320" y="539">included in</text>
<text font-family="Liberation Sans" font-size="10.2" fill="#111" text-anchor="start" x="1320" y="552">carrier service</text>
</g></svg>
<!-- scrollbars -->
<div class="a" style="left:1902px;top:106px;width:17px;height:799px;background:#3e3e42"></div>
<div class="a" style="left:1906px;top:123px;width:9px;height:514px;background:#7a7a7a"></div>
<svg class="a" style="left:1902px;top:106px" width="17" height="799">
 <path d="M4.5 12.5h8l-4-4z" fill="#9a9a9a"/>
 <path d="M4.5 789h8l-4 4z" fill="#9a9a9a"/>
</svg>
<div class="a" style="left:815px;top:905px;width:1104px;height:17px;background:#3e3e42"></div>
<div class="a" style="left:831px;top:909px;width:828px;height:9px;background:#7a7a7a"></div>
<svg class="a" style="left:815px;top:905px" width="1104" height="17">
 <path d="M9.5 4.5v8l-4-4z" fill="#9a9a9a"/>
 <path d="M1074 4.5v8l4-4z" fill="#9a9a9a"/>
</svg>
</div>
<!-- STATUS -->
<div id="status" class="a" style="left:0;top:923px;width:1919px;height:24px;background:#007acc">
<div class="t" style="left:2px;top:5px;font-size:11.4px">StartEvent:Goods to ship</div>
<div class="t" style="left:139px;top:5px;font-size:11.4px">Left:</div>
<div class="t" style="left:172px;top:5px;font-size:11.4px">69 x Top:</div>
<div class="t" style="left:230px;top:5px;font-size:11.4px">234 - Width:</div>
<div class="t" style="left:304px;top:5px;font-size:11.4px">30 x Height:</div>
<div class="t" style="left:377px;top:5px;font-size:11.4px">30</div>
<svg class="a" style="left:1590px;top:-1px" width="150" height="25">
 <path d="M13 12.5h7" stroke="#fff" stroke-width="1.2"/>
 <path d="M30 13.5h88" stroke="#c0c0c0" stroke-width="1"/>
 <rect x="30.5" y="6.5" width="3" height="13" fill="#222" stroke="#aaa" stroke-width="1"/>
 <path d="M128 13.5h7M131.5 10v7" stroke="#fff" stroke-width="1.2"/>
</svg>
<div class="t" style="left:1741px;top:5px;font-size:10.6px;color:#5a9fd0">CAP</div>
<div class="t" style="left:1780px;top:5px;font-size:10.6px;color:#fff;font-weight:bold">NUM</div>
<div class="t" style="left:1826px;top:5px;font-size:10.6px;color:#5a9fd0">SCRL</div>
<div class="t" style="left:1872px;top:5px;font-size:10.6px;color:#5a9fd0">CLOUD</div>
</div>
</body></html>
